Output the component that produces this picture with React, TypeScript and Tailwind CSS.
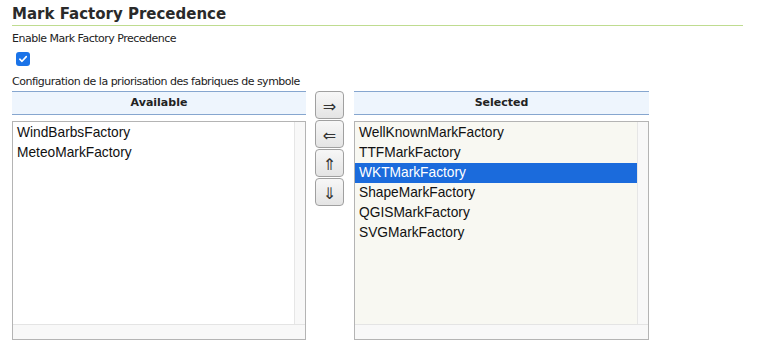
import React from "react";

const available = ["WindBarbsFactory", "MeteoMarkFactory"];
const selected = [
  "WellKnownMarkFactory",
  "TTFMarkFactory",
  "WKTMarkFactory",
  "ShapeMarkFactory",
  "QGISMarkFactory",
  "SVGMarkFactory",
];

function ListHeader(props: { title: string }) {
  return (
    <div className="h-[24px] border-t border-b border-[#86a6cf] bg-[#eef5fd] flex items-center justify-center text-[11px] font-bold text-[#222]">
      {props.title}
    </div>
  );
}

function ListBox(props: { items: string[]; active?: number; bg: string }) {
  return (
    <div className={"mt-[6px] h-[219px] border border-[#b4b4b4] flex flex-col " + props.bg}>
      <div className="flex flex-1 min-h-0">
        <div className="flex-1 pt-[1px] font-['Liberation_Sans',Arial,sans-serif] text-[13.75px] text-[#111]">
          {props.items.map((it, i) => (
            <div
              key={it}
              className={
                i === props.active
                  ? "h-[20px] leading-[20px] pl-[4px] bg-[#1b6bdc] text-white"
                  : "h-[20px] leading-[20px] pl-[4px]"
              }
            >
              {it}
            </div>
          ))}
        </div>
        <div className="w-[11px] border-l border-[#e6e6e6] bg-[#f8f8f8]" />
      </div>
      <div className="h-[15px] border-t border-[#e4e4e4] bg-[#f8f8f8]" />
    </div>
  );
}

function MoveButton(props: { label: string }) {
  return (
    <button className="w-[29px] h-[28px] rounded-[4px] border border-[#a0a0a0] bg-gradient-to-b from-[#f7f7f7] to-[#e4e4e4] text-[16px] leading-none text-[#333] flex items-center justify-center pt-[4px]">
      {props.label}
    </button>
  );
}

export default function App() {
  return (
    <div className="bg-white w-[759px] h-[350px] pl-[12px] pt-[5px] font-['DejaVu_Sans',Verdana,sans-serif] text-[#222]">
      <div className="w-[731px] border-b border-[#bfdc90] pb-[1px] text-[15px] leading-[19px] font-bold text-[#2a2a2a]">
        Mark Factory Precedence
      </div>
      <div className="mt-[6px] text-[11px] leading-[14px] tracking-[-0.5px]">Enable Mark Factory Precedence</div>
      <div className="mt-[6px] ml-[4px] w-[14px] h-[14px] rounded-[3px] bg-[#1a73e8] flex items-center justify-center">
        <svg width="10" height="10" viewBox="0 0 10 10">
          <path d="M1.8 5.2 L4 7.3 L8.3 2.6" fill="none" stroke="white" strokeWidth="1.6" strokeLinecap="round" strokeLinejoin="round" />
        </svg>
      </div>
      <div className="mt-[9px] text-[11px] leading-[14px] tracking-[-0.5px]">Configuration de la priorisation des fabriques de symbole</div>
      <div className="mt-[2px] flex items-start">
        <div className="w-[294px]">
          <ListHeader title="Available" />
          <ListBox items={available} bg="bg-white" />
        </div>
        <div className="ml-[9px] flex flex-col gap-[1px]">
          <MoveButton label="⇒" />
          <MoveButton label="⇐" />
          <MoveButton label="⇑" />
          <MoveButton label="⇓" />
        </div>
        <div className="ml-[10px] w-[295px]">
          <ListHeader title="Selected" />
          <ListBox items={selected} active={2} bg="bg-[#f8f8f2]" />
        </div>
      </div>
    </div>
  );
}
